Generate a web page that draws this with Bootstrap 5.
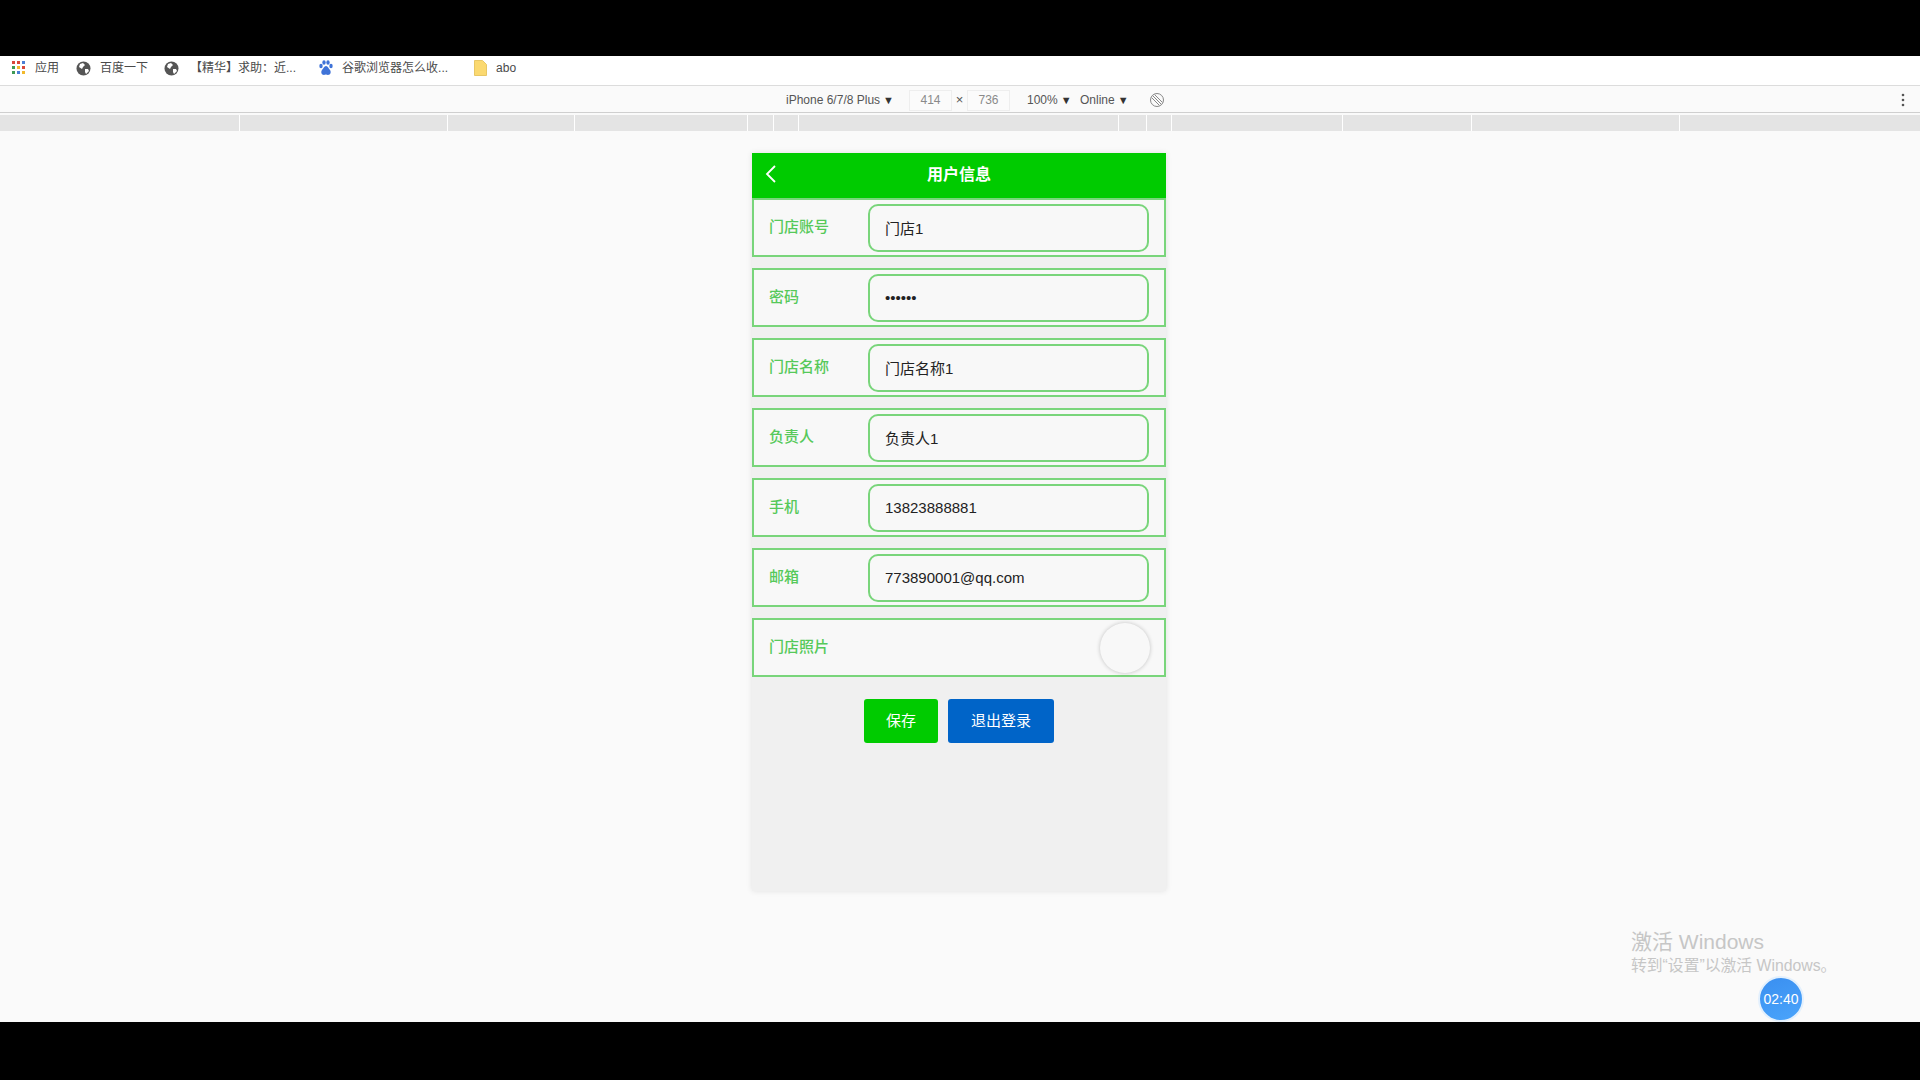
<!doctype html>
<html lang="zh">
<head>
<meta charset="utf-8">
<title>用户信息</title>
<link rel="stylesheet" href="https://cdn.jsdelivr.net/npm/bootstrap@5.3.0/dist/css/bootstrap.min.css">
<style>
html,body{height:1080px;overflow:hidden;background:#000}
body{font-family:"Liberation Sans","Noto Sans CJK SC",sans-serif;display:flex;flex-direction:column}
.blackbar-top{height:56px;background:#000;flex:none}
.blackbar-bottom{height:58px;background:#000;flex:none}
.bookmarks{height:30px;background:#fff;border-bottom:1px solid #dcdcdc;flex:none;font-size:12px;color:#4a4a4a;padding:0 0 5px 12px}
.bm-apps{margin-right:17px}
.bm-globe{margin-right:18px}
.bm-first{margin-right:16px}
.bm-wide{gap:11px}
.bm-item{display:flex;align-items:center;gap:9px}
.bm-item.bm-wide{gap:11px}
.bm-item svg{flex:none}
.devbar{height:27px;background:#fafafa;border-bottom:1px solid #cfcfcf;flex:none;font-size:12px;color:#555;padding:2px 15px 0 786px}
.devinput{width:43px;height:21px;border:1px solid #eee;background:#fbfbfb;color:#8a8a8a;text-align:center;line-height:19px}
.tri{font-size:11px;color:#333;margin-left:3px}
.dev-times{width:15px;text-align:center;font-size:13px;color:#555}
.dev-device{width:123px}
.dev-zoom{margin-left:17px;width:53px}
.dev-online{width:69px}
.kebab{margin-left:auto}
.mediabar{height:18px;padding:2px 0 0;background:#fafafa;flex:none}
.media-grid{height:16px;display:grid;gap:1px;background:#fff;grid-template-columns:239px 207px 126px 172px 25px 24px 319px 27px 24px 170px 128px 207px 1fr}
.media-grid div{background:#e4e4e4}
.stage{flex:1 1 auto;background:#fafafa;position:relative;min-height:0}
.phone{width:414px;height:738px;margin:22px 0 0 752px;background:#f0f0f0;box-shadow:0 0 6px rgba(0,0,0,.1);position:relative}
.phone-head{height:45px;background:#00cb00;color:#fff;font-weight:700;font-size:16px;position:relative;padding-bottom:2px}
.phone-back{position:absolute;left:12px;top:11px}
.info-row{height:59px;margin-bottom:11px;background:#f8f8f8;border:2px solid #79d57b;padding:0 15px;color:#56c95a;font-size:15px}
.info-row:first-of-type{border-top:0}
.info-label{width:99px;flex:none;font-weight:500}
.info-input.form-control{width:281px;height:48px;border:2px solid #79d57b;border-radius:10px;background:#f8f8f8;font-size:15px;color:#222;padding:0 15px 1px;box-shadow:none}
.avatar-circle{width:50px;height:50px;border-radius:50%;background:#f8f8f8;box-shadow:0 0 4px rgba(0,0,0,.22);margin-right:-1px}
.action-row{gap:10px;margin-top:22px}
.btn.act{height:44px;border:0;border-radius:3px;color:#fff;font-size:15px;padding:0;display:flex;align-items:center;justify-content:center}
.act-save{width:74px;background:#00cb00}
.act-logout{width:106px;background:#0064c8}
.winmark{position:absolute;left:1631px;top:800px;color:#c6c6c6;line-height:1}
.winmark-big{font-size:21px;margin-bottom:6px}
.winmark-small{font-size:15.800px}
.timer{position:absolute;left:1758px;top:845px;width:46px;height:46px;border-radius:50%;background:linear-gradient(160deg,#3a8ff0,#4aa4fb);border:2px solid #e3f0fd;color:#fff;font-size:14px;line-height:42px;text-align:center}
</style>
</head>
<body>
<div class="blackbar-top"></div>
<div class="bookmarks d-flex align-items-center">
  <div class="bm-item bm-apps">
    <svg width="14" height="14" viewBox="0 0 14 14"><g><rect x="0" y="0" width="3" height="3" fill="#d9483b"/><rect x="5" y="0" width="3" height="3" fill="#d9483b"/><rect x="10" y="0" width="3" height="3" fill="#4a7fd6"/><rect x="0" y="5" width="3" height="3" fill="#3f9a55"/><rect x="5" y="5" width="3" height="3" fill="#f2b92c"/><rect x="10" y="5" width="3" height="3" fill="#d9483b"/><rect x="0" y="10" width="3" height="3" fill="#3f9a55"/><rect x="5" y="10" width="3" height="3" fill="#4a7fd6"/><rect x="10" y="10" width="3" height="3" fill="#f2b92c"/></g></svg>
    <span>应用</span>
  </div>
  <div class="bm-item bm-first">
    <svg width="15" height="15" viewBox="0 0 15 15"><circle cx="7.5" cy="7.5" r="7" fill="#555"/><path d="M4 3l3-1 2 2-2 2-1 2-3-2zM9 8l3 0 1 2-3 3-1-2z" fill="#fff"/></svg>
    <span>百度一下</span>
  </div>
  <div class="bm-item bm-globe bm-wide">
    <svg width="15" height="15" viewBox="0 0 15 15"><circle cx="7.5" cy="7.5" r="7" fill="#555"/><path d="M4 3l3-1 2 2-2 2-1 2-3-2zM9 8l3 0 1 2-3 3-1-2z" fill="#fff"/></svg>
    <span>【精华】求助：近...</span>
  </div>
  <div class="bm-item bm-globe ms-1">
    <svg width="15" height="16" viewBox="0 0 15 16" fill="#3f73d8"><ellipse cx="3" cy="6" rx="1.7" ry="2.3"/><ellipse cx="6" cy="2.5" rx="1.7" ry="2.3"/><ellipse cx="10" cy="2.5" rx="1.7" ry="2.3"/><ellipse cx="13" cy="6" rx="1.7" ry="2.3"/><path d="M8 6c-2 0-2.500 2.500-4 4-1.500 2-.5 5 2 5 1 0 1.200-.4 2-.4s1.200.4 2 .4c2.500 0 3.500-3 2-5-1.500-1.500-2-4-4-4z"/></svg>
    <span>谷歌浏览器怎么收...</span>
  </div>
  <div class="bm-item ms-2">
    <svg width="13" height="16" viewBox="0 0 13 16"><path d="M.5.500h8l4 4v11H.5z" fill="#fbd970" stroke="#e8c765"/></svg>
    <span>abo</span>
  </div>
</div>
<div class="devbar d-flex align-items-center">
  <span class="dev-device">iPhone 6/7/8 Plus<span class="tri">▼</span></span>
  <span class="devinput">414</span><span class="dev-times">×</span><span class="devinput">736</span>
  <span class="dev-zoom">100%<span class="tri">▼</span></span>
  <span class="dev-online">Online<span class="tri">▼</span></span>
  <svg width="16" height="16" viewBox="0 0 16 16" fill="none" stroke="#888" stroke-width="1"><circle cx="8" cy="8" r="6.500"/><path d="M3.500 3.500l9 9M5.500 2.500l8 8M2.500 5.500l8 8"/></svg>
  <svg class="kebab" width="4" height="14" viewBox="0 0 4 14" fill="#555"><circle cx="2" cy="2" r="1.300"/><circle cx="2" cy="7" r="1.300"/><circle cx="2" cy="12" r="1.300"/></svg>
</div>
<div class="mediabar">
  <div class="media-grid"><div></div><div></div><div></div><div></div><div></div><div></div><div></div><div></div><div></div><div></div><div></div><div></div><div></div></div>
</div>
<div class="stage">
  <div class="phone">
    <div class="phone-head d-flex align-items-center justify-content-center">
      <svg class="phone-back" width="14" height="20" viewBox="0 0 14 20" fill="none" stroke="#fff" stroke-width="1.800"><path d="M11 2L3 10l8 8"/></svg>
      用户信息
    </div>
    <div class="info-row d-flex align-items-center"><span class="info-label">门店账号</span><input class="form-control info-input" value="门店1"></div>
    <div class="info-row d-flex align-items-center"><span class="info-label">密码</span><input class="form-control info-input" type="password" value="123456"></div>
    <div class="info-row d-flex align-items-center"><span class="info-label">门店名称</span><input class="form-control info-input" value="门店名称1"></div>
    <div class="info-row d-flex align-items-center"><span class="info-label">负责人</span><input class="form-control info-input" value="负责人1"></div>
    <div class="info-row d-flex align-items-center"><span class="info-label">手机</span><input class="form-control info-input" value="13823888881"></div>
    <div class="info-row d-flex align-items-center"><span class="info-label">邮箱</span><input class="form-control info-input" value="773890001@qq.com"></div>
    <div class="info-row d-flex align-items-center justify-content-between"><span class="info-label">门店照片</span><div class="avatar-circle"></div></div>
    <div class="d-flex justify-content-center action-row">
      <button class="btn act act-save" type="button">保存</button>
      <button class="btn act act-logout" type="button">退出登录</button>
    </div>
  </div>
  <div class="winmark"><div class="winmark-big">激活 Windows</div><div class="winmark-small">转到“设置”以激活 Windows。</div></div>
  <div class="timer">02:40</div>
</div>
<div class="blackbar-bottom"></div>
<script src="https://cdn.jsdelivr.net/npm/bootstrap@5.3.0/dist/js/bootstrap.bundle.min.js"></script>
</body>
</html>
